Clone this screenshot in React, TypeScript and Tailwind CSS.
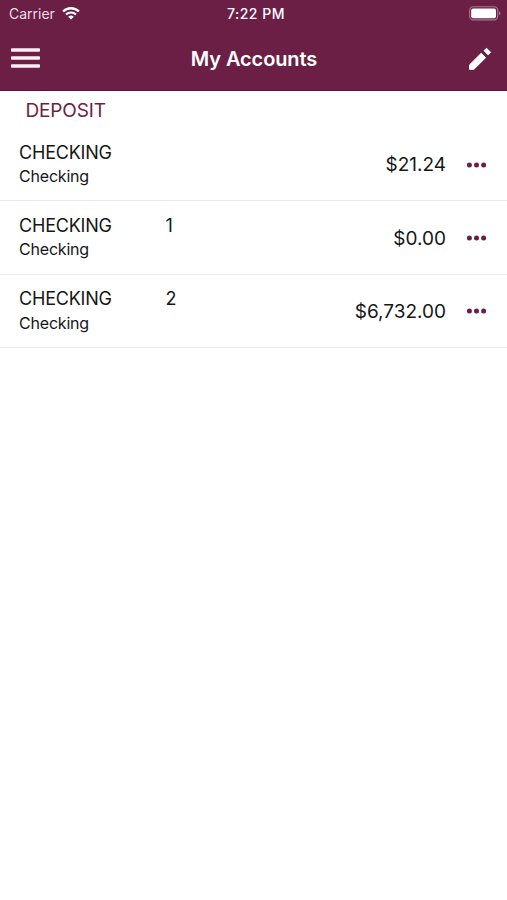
import React from "react";

interface Account {
  name: string;
  suffix: string;
  type: string;
  balance: string;
}

const accounts: Account[] = [
  { name: "CHECKING", suffix: "", type: "Checking", balance: "$21.24" },
  { name: "CHECKING", suffix: "1", type: "Checking", balance: "$0.00" },
  { name: "CHECKING", suffix: "2", type: "Checking", balance: "$6,732.00" },
];

function WifiIcon() {
  return (
    <svg width="18" height="13" viewBox="0 0 18 13" fill="none">
      <path d="M1.1 4.5a11.2 11.2 0 0 1 15.8 0" stroke="#fff" strokeWidth="2.3" />
      <path d="M4 7.6a7.1 7.1 0 0 1 10 0" stroke="#fff" strokeWidth="2.1" />
      <path d="M9 12.6 6.2 9.8a4 4 0 0 1 5.6 0Z" fill="#fff" />
    </svg>
  );
}

function BatteryIcon() {
  return (
    <svg width="33" height="15" viewBox="0 0 33 15" fill="none">
      <rect
        x="0.7"
        y="0.7"
        width="28"
        height="13.2"
        rx="3.6"
        stroke="#a67a90"
        strokeWidth="1.1"
      />
      <rect x="2.2" y="2.4" width="24.8" height="9.8" rx="2" fill="#fff" />
      <path d="M30 5.2c1.9.7 1.9 3.5 0 4.2Z" fill="#a67a90" />
    </svg>
  );
}

function MenuIcon() {
  return (
    <svg width="30" height="22" viewBox="0 0 30 22" fill="#fbeff5">
      <rect x="0" y="0.2" width="29" height="3.6" rx="0.8" />
      <rect x="0" y="8.2" width="29" height="3.6" rx="0.8" />
      <rect x="0" y="16.2" width="29" height="3.6" rx="0.8" />
    </svg>
  );
}

function PencilIcon() {
  return (
    <svg
      width="24"
      height="24"
      viewBox="0 0 24 24"
      fill="#fff"
      stroke="#fff"
      strokeLinejoin="round"
    >
      <path d="M1.5 17.9 13.2 6.3l4.4 4.4L5.9 22.3H1.5Z" />
      <path d="M16 3.7 18.6 1.3l4 4L20.1 7.8Z" />
    </svg>
  );
}

function MoreIcon() {
  return (
    <svg width="20" height="6" viewBox="0 0 20 6" fill="#6b1f45">
      <circle cx="2.4" cy="3" r="2.5" />
      <circle cx="9.5" cy="3" r="2.5" />
      <circle cx="16.6" cy="3" r="2.5" />
    </svg>
  );
}

function AccountRow({ account }: { account: Account }) {
  return (
    <li className="flex h-[73.33px] items-center border-b border-[#e9e9e9] pl-[19px] pr-5">
      <div className="flex-1">
        <div className="flex h-6 items-center text-[18px] tracking-[-0.2px]">
          <span className="w-[146.5px]">{account.name}</span>
          <span>{account.suffix}</span>
        </div>
        <p className="h-6 text-[16px] leading-6 tracking-[-0.2px]">
          {account.type}
        </p>
      </div>
      <span className="mr-[21px] pt-[3px] text-[19px]">{account.balance}</span>
      <button aria-label="More" className="pt-px">
        <MoreIcon />
      </button>
    </li>
  );
}

export default function App() {
  return (
    <div className="h-[900px] w-[507px] overflow-hidden bg-white font-['Inter','Liberation_Sans',sans-serif] text-[#161616]">
      <header className="h-[91px] border-b border-[#561535] bg-[#6b1f45] text-white">
        {/* Status bar */}
        <div className="grid h-[27px] grid-cols-3 items-center pl-[9px] pr-[5px] text-[14px]">
          <div className="flex items-center gap-[7px] text-[#eadde4]">
            <span>Carrier</span>
            <WifiIcon />
          </div>
          <span className="pl-px text-center font-medium tracking-[0.5px]">
            7:22 PM
          </span>
          <div className="flex justify-end">
            <BatteryIcon />
          </div>
        </div>
        {/* Navigation bar */}
        <div className="flex h-[63px] items-center justify-between pl-[11px] pr-[15px]">
          <button aria-label="Menu">
            <MenuIcon />
          </button>
          <h1 className="pr-px text-[20px] font-semibold tracking-[-0.1px]">
            My Accounts
          </h1>
          <button aria-label="Edit">
            <PencilIcon />
          </button>
        </div>
      </header>
      <main>
        <h2 className="flex h-[37px] items-center pl-[25.5px] pt-[3px] text-[19px] tracking-[-0.15px] text-[#6b1f45]">
          DEPOSIT
        </h2>
        <ul>
          {accounts.map((account) => (
            <AccountRow key={account.balance} account={account} />
          ))}
        </ul>
      </main>
    </div>
  );
}
